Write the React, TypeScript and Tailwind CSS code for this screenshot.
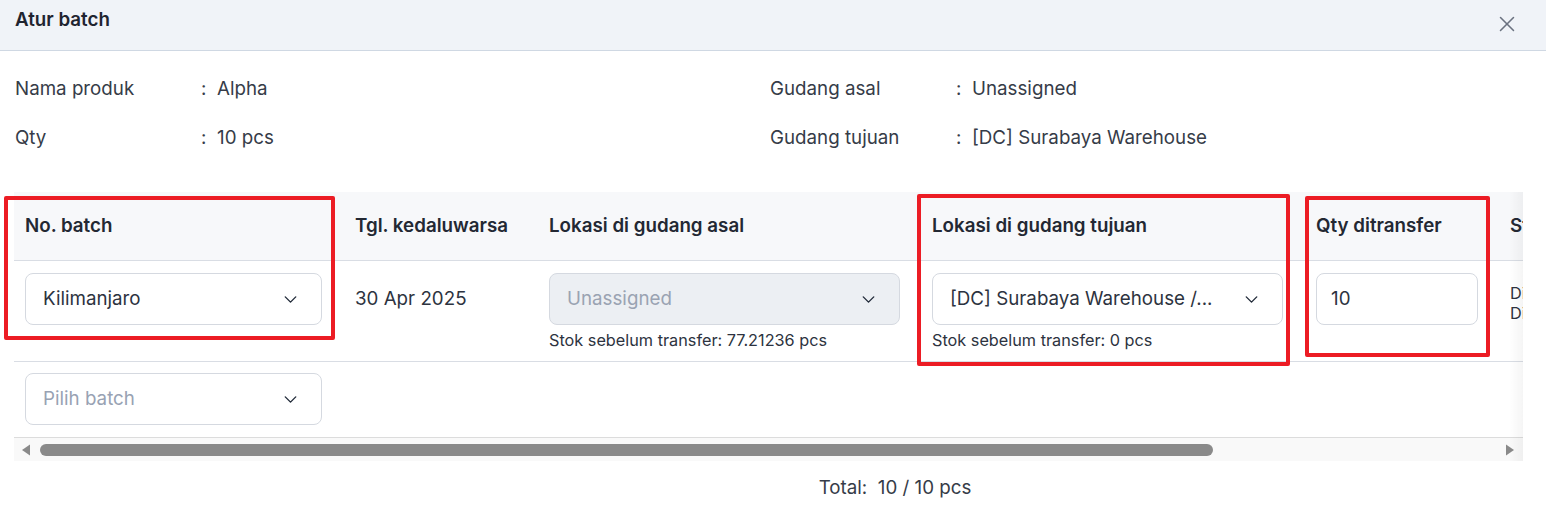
import { ChevronDown, X } from "lucide-react";

const font = { fontFamily: "Inter, 'Noto Sans', sans-serif" };

function Select({
  value,
  placeholder,
  disabled,
  width,
}: {
  value?: string;
  placeholder?: string;
  disabled?: boolean;
  width: string;
}) {
  return (
    <div
      className={`flex h-[52px] items-center justify-between rounded-lg border border-[#d5d9e0] pl-[17px] pr-[20px] text-[18.75px] ${width} ${
        disabled ? "bg-[#eceff3] text-[#9aa3b2]" : "bg-white text-[#2d3340]"
      }`}
    >
      <span className={`truncate ${value ? "" : "text-[#98a2b3]"}`}>{value ?? placeholder}</span>
      <ChevronDown size={21} strokeWidth={1.6} className="shrink-0 text-[#1f2937]" />
    </div>
  );
}

function InfoRow({ label, value }: { label: string; value: string }) {
  return (
    <div className="flex h-[49px] items-center text-[18.75px] text-[#363c48]">
      <span className="w-[186px]">{label}</span>
      <span className="w-[16px]">:</span>
      <span>{value}</span>
    </div>
  );
}

const cols = ["w-[330px]", "w-[194px]", "w-[383px]", "w-[384px]", "w-[194px]", "w-[160px]"];

export default function App() {
  return (
    <div className="relative h-[518px] w-[1546px] overflow-hidden bg-white" style={font}>
      {/* header */}
      <div className="flex h-[51px] items-center justify-between border-b border-[#cfd8e3] bg-[#f0f3f8] pl-[15px] pr-[26px]">
        <h1 className="-mt-[10px] text-[18.75px] font-semibold text-[#1f2430]">Atur batch</h1>
        <X size={26} strokeWidth={1.4} className="-mt-[2px] text-[#6b7280]" />
      </div>

      {/* info */}
      <div className="grid grid-cols-[755px_1fr] pl-[15px] pt-[14px]">
        <div>
          <InfoRow label="Nama produk" value="Alpha" />
          <InfoRow label="Qty" value="10 pcs" />
        </div>
        <div>
          <InfoRow label="Gudang asal" value="Unassigned" />
          <InfoRow label="Gudang tujuan" value="[DC] Surabaya Warehouse" />
        </div>
      </div>

      {/* table */}
      <div className="relative ml-[14px] mt-[29px] w-[1509px] overflow-hidden">
        <div className="w-max">
          <div className="flex h-[69px] items-center border-b border-[#d9dde4] bg-[#f7f8fa] text-[18.75px] font-semibold text-[#232833]">
            {["No. batch", "Tgl. kedaluwarsa", "Lokasi di gudang asal", "Lokasi di gudang tujuan", "Qty ditransfer", "Status"].map(
              (h, i) => (
                <div key={h} className={`${cols[i]} shrink-0 px-[11px]`}>
                  {h}
                </div>
              )
            )}
          </div>

          <div className="flex border-b border-[#d9dde4] pb-[11px] pt-[12px] text-[18.75px] text-[#2d3340]">
            <div className={`${cols[0]} shrink-0 px-[11px]`}>
              <Select value="Kilimanjaro" width="w-[297px]" />
            </div>
            <div className={`${cols[1]} shrink-0 px-[11px]`}>
              <div className="flex h-[52px] items-center">30 Apr 2025</div>
            </div>
            <div className={`${cols[2]} shrink-0 px-[11px]`}>
              <Select value="Unassigned" disabled width="w-[351px]" />
              <div className="mt-[5px] h-[20px] text-[16.25px] leading-[20px] text-[#2d3340]">
                Stok sebelum transfer: 77.21236 pcs
              </div>
            </div>
            <div className={`${cols[3]} shrink-0 px-[11px]`}>
              <Select value="[DC] Surabaya Warehouse /..." width="w-[351px]" />
              <div className="mt-[5px] h-[20px] text-[16.25px] leading-[20px] text-[#2d3340]">
                Stok sebelum transfer: 0 pcs
              </div>
            </div>
            <div className={`${cols[4]} shrink-0 px-[11px]`}>
              <div className="flex h-[52px] w-[162px] items-center rounded-lg border border-[#d5d9e0] px-[14px]">10</div>
            </div>
            <div className={`${cols[5]} shrink-0 px-[11px] pt-[10px] text-[16.25px] leading-[20px]`}>
              <div>Diminta</div>
              <div>Diproses</div>
            </div>
          </div>

          <div className="flex h-[75px] items-start pt-[11px]">
            <div className={`${cols[0]} shrink-0 px-[11px]`}>
              <Select placeholder="Pilih batch" width="w-[297px]" />
            </div>
          </div>
        </div>

        {/* scrollbar */}
        <div className="flex h-[24px] items-center border-t border-[#dcdcdc] bg-[#f9f9f9]">
          <svg width="26" height="24" viewBox="0 0 26 24" className="shrink-0">
            <path d="M16 6.5 L8 12 L16 17.5 Z" fill="#8a8a8a" />
          </svg>
          <div className="h-[12px] w-[1173px] rounded-full bg-[#8a8a8a]" />
          <div className="flex-1" />
          <svg width="24" height="24" viewBox="0 0 24 24" className="mr-[2px] shrink-0">
            <path d="M9 6.5 L17 12 L9 17.5 Z" fill="#8a8a8a" />
          </svg>
        </div>

        <div className="pointer-events-none absolute bottom-0 right-0 top-0 w-[14px] bg-gradient-to-r from-transparent to-[rgba(0,0,0,0.04)]" />
      </div>

      {/* total */}
      <div className="mt-[13px] flex justify-center pl-[244px] text-[18.75px] text-[#363c48]">
        <span>Total:&nbsp; 10 / 10 pcs</span>
      </div>

      {/* annotation boxes */}
      <div className="pointer-events-none absolute left-[4px] top-[196px] h-[144px] w-[331px] rounded-[2px] border-[4px] border-[#ec1c24]" />
      <div className="pointer-events-none absolute left-[917px] top-[194px] h-[172px] w-[373px] rounded-[2px] border-[4px] border-[#ec1c24]" />
      <div className="pointer-events-none absolute left-[1305px] top-[196px] h-[161px] w-[185px] rounded-[2px] border-[4px] border-[#ec1c24]" />
    </div>
  );
}
